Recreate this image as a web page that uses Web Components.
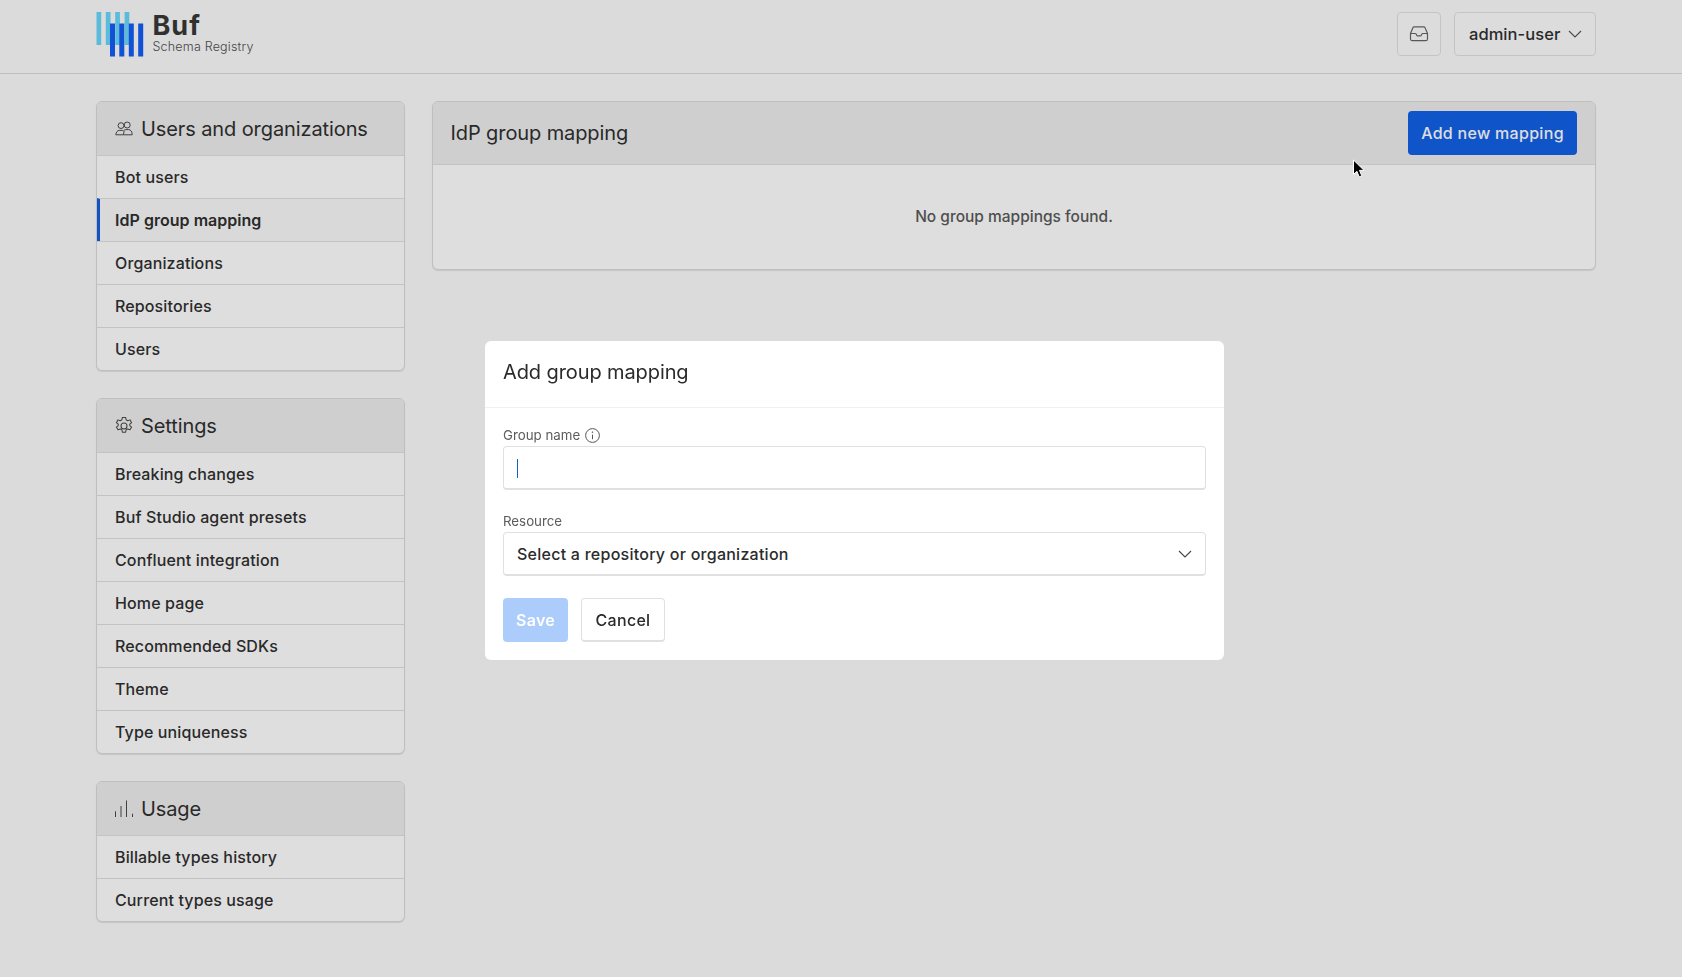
<!DOCTYPE html>
<html lang="en">
<head>
<meta charset="utf-8">
<title>IdP group mapping</title>
<style>
	html, body { margin: 0; height: 100%; }
	body { background: #fcfcfc; color: #303030; font-family: Inter, "Liberation Sans", sans-serif; overflow: hidden; }
</style>
</head>
<body>
<app-header></app-header>
<app-layout>
	<side-bar slot="side">
		<nav-group title="Users and organizations" icon="users">
			<nav-item>Bot users</nav-item>
			<nav-item active>IdP group mapping</nav-item>
			<nav-item>Organizations</nav-item>
			<nav-item>Repositories</nav-item>
			<nav-item>Users</nav-item>
		</nav-group>
		<nav-group title="Settings" icon="gear">
			<nav-item>Breaking changes</nav-item>
			<nav-item>Buf Studio agent presets</nav-item>
			<nav-item>Confluent integration</nav-item>
			<nav-item>Home page</nav-item>
			<nav-item>Recommended SDKs</nav-item>
			<nav-item>Theme</nav-item>
			<nav-item>Type uniqueness</nav-item>
		</nav-group>
		<nav-group title="Usage" icon="chart">
			<nav-item>Billable types history</nav-item>
			<nav-item>Current types usage</nav-item>
		</nav-group>
	</side-bar>
	<mapping-card></mapping-card>
</app-layout>
<modal-backdrop>
	<mapping-dialog></mapping-dialog>
</modal-backdrop>
<mouse-pointer></mouse-pointer>

<script>
const ICONS = {
	users: `<svg width="18" height="18" viewBox="0 0 18 18" fill="none" stroke="currentColor" stroke-width="1"><circle cx="6" cy="5.6" r="2.9"/><circle cx="12.2" cy="5" r="3"/><path d="M.8 14.8c.3-2.6 1.6-4.4 3.4-4.4h3.2c.9 0 1.4.5 1.8 1.2M.8 14.8h7.6l.6-3.2M8.6 14.8h8.6c0-3.2-1.5-5.2-3.5-5.2h-2.8c-.9 0-1.7.4-2.2 1.2"/></svg>`,
	gear: `<svg width="18" height="18" viewBox="1.2 1.2 15.6 15.6" fill="none" stroke="currentColor" stroke-width=".9"><circle cx="9" cy="9" r="2.6"/><path d="M7.6 1.6h2.8l.4 2 1.4.8 2-.7 1.4 2.4-1.6 1.3v1.2l1.6 1.3-1.4 2.4-2-.7-1.4.8-.4 2H7.6l-.4-2-1.4-.8-2 .7-1.4-2.4 1.6-1.3V7.4L2.4 6.1l1.4-2.4 2 .7 1.4-.8z" stroke-linejoin="round"/></svg>`,
	chart: `<svg width="18" height="18" viewBox="0 0 18 18" fill="none" stroke="currentColor" stroke-width="1"><path d="M.5 17v-5.7M6 17V6M11.5 17V.5M17.5 17v-3.3"/></svg>`
};

class AppHeader extends HTMLElement {
	constructor() {
		super();
		this.attachShadow({mode:'open'});
		this.shadowRoot.innerHTML = `
			<style>
				:host {
					display: flex;
					align-items: center;
					justify-content: space-between;
					box-sizing: border-box;
					height: 74px;
					padding: 0 86px 5px 96px;
					border-bottom: 1px solid #dcdcdc;
					background: #fcfcfc;
				}
				.brand { display: flex; align-items: flex-start; gap: 8.5px; }
				.names { display: flex; flex-direction: column; }
				.buf { padding-top: 1px; font-size: 27px; font-weight: 700; line-height: 26px; height: 26px; color: #383838; letter-spacing: 1px; }
				.sub { margin-top: .5px; font-size: 12.5px; line-height: 15px; color: #505050; font-weight: 300; letter-spacing: .2px; }
				.actions { display: flex; gap: 13px; }
				button {
					display: flex;
					align-items: center;
					box-sizing: border-box;
					height: 44px;
					background: #fdfdfd;
					border: 1px solid #e2e2e2;
					border-radius: 4px;
					font: 500 16.5px Inter, "Liberation Sans", sans-serif;
					letter-spacing: .05px;
					color: #303030;
					padding: 0;
				}
				.inbox { width: 44px; justify-content: center; color: #666; }
				.user { width: 142px; padding-left: 14px; gap: 8px; }
			</style>
			<div class="brand">
				<svg width="48" height="45" viewBox="0 0 48 45">
					<g fill="#68d8fb">
						<rect x="0.5" y="0" width="4.7" height="33"/>
						<rect x="9.8" y="0" width="4.7" height="33"/>
						<rect x="19.2" y="0" width="4.7" height="33"/>
						<rect x="28.6" y="0" width="4.7" height="33"/>
					</g>
					<g fill="#145df5">
						<rect x="14" y="11.5" width="5" height="33"/>
						<rect x="23.3" y="11.5" width="5" height="33"/>
						<rect x="32.8" y="11.5" width="5" height="33"/>
						<rect x="42.2" y="11.5" width="5" height="33"/>
					</g>
				</svg>
				<div class="names">
					<span class="buf">Buf</span>
					<span class="sub">Schema Registry</span>
				</div>
			</div>
			<div class="actions">
				<button class="inbox" aria-label="Inbox">
					<svg width="20" height="18" viewBox="0 0 20 18" fill="none" stroke="currentColor" stroke-width="1.2" stroke-linejoin="round"><path d="M1.5 8.5 4 2.6c.2-.5.7-.8 1.2-.8h9.6c.5 0 1 .3 1.2.8l2.5 5.9v5.4c0 1-.8 1.8-1.8 1.8H3.3c-1 0-1.8-.8-1.8-1.8z"/><path d="M1.5 8.5h4.7c.4 0 .7.2.9.6l.6 1.2c.2.4.5.6.9.6h2.8c.4 0 .7-.2.9-.6l.6-1.2c.2-.4.5-.6.9-.6h4.7"/></svg>
				</button>
				<button class="user">admin-user
					<svg width="14" height="8" viewBox="0 0 14 8" fill="none" stroke="#555" stroke-width="1.1"><path d="M1 1l6 6 6-6"/></svg>
				</button>
			</div>
		`;
	}
}

class AppLayout extends HTMLElement {
	constructor() {
		super();
		this.attachShadow({mode:'open'});
		this.shadowRoot.innerHTML = `
			<style>
				:host {
					display: grid;
					grid-template-columns: 309px 1fr;
					column-gap: 27px;
					align-items: start;
					padding: 27px 86px 0 96px;
				}
			</style>
			<slot name="side"></slot>
			<slot></slot>
		`;
	}
}

class SideBar extends HTMLElement {
	constructor() {
		super();
		this.attachShadow({mode:'open'});
		this.shadowRoot.innerHTML = `
			<style>:host { display: flex; flex-direction: column; gap: 27px; }</style>
			<slot></slot>
		`;
	}
}

class NavGroup extends HTMLElement {
	constructor() {
		super();
		this.attachShadow({mode:'open'});
		const icon = ICONS[this.getAttribute('icon')] || '';
		const title = this.getAttribute('title');
		this.removeAttribute('title');
		this.shadowRoot.innerHTML = `
			<style>
				:host {
					display: block;
					box-sizing: border-box;
					background: #fff;
					border: 1px solid #dcdcdc;
					border-radius: 6px;
					box-shadow: 0 1px 1px rgba(0, 0, 0, .1);
					overflow: hidden;
				}
				header {
					display: flex;
					align-items: center;
					gap: 8px;
					box-sizing: border-box;
					height: 53px;
					padding-left: 18px;
					background: #eeeeee;
					font-size: 20px;
					letter-spacing: -.1px;
					color: #303030;
				}
				svg { display: block; color: #4a4a4a; }
			</style>
			<header>${icon}<span>${title}</span></header>
			<slot></slot>
		`;
	}
}

class NavItem extends HTMLElement {
	constructor() {
		super();
		this.attachShadow({mode:'open'});
		this.shadowRoot.innerHTML = `
			<style>
				:host {
					display: block;
					box-sizing: border-box;
					height: 43px;
					line-height: 42px;
					padding-left: 18px;
					border-top: 1px solid #e0e0e0;
					font-size: 16px;
					font-weight: 500;
					letter-spacing: .13px;
					color: #303030;
				}
				:host([active]) {
					padding-left: 15px;
					border-left: 3px solid #1560e0;
					background: #fafafa;
					font-weight: 600;
					letter-spacing: .03px;
				}
			</style>
			<slot></slot>
		`;
	}
}

class MappingCard extends HTMLElement {
	constructor() {
		super();
		this.attachShadow({mode:'open'});
		this.shadowRoot.innerHTML = `
			<style>
				:host {
					display: block;
					box-sizing: border-box;
					height: 169px;
					background: #fff;
					border: 1px solid #dcdcdc;
					border-radius: 6px;
					box-shadow: 0 1px 1px rgba(0, 0, 0, .1);
					overflow: hidden;
				}
				header {
					display: flex;
					align-items: center;
					justify-content: space-between;
					box-sizing: border-box;
					height: 63px;
					padding: 0 18px 0 17.5px;
					background: #eeeeee;
					border-bottom: 1px solid #e0e0e0;
					font-size: 20px;
					letter-spacing: -.1px;
				}
				button {
					box-sizing: border-box;
					width: 169px;
					height: 44px;
					background: #1361e8;
					border: 0;
					border-radius: 4px;
					color: #fff;
					font: 500 16px Inter, "Liberation Sans", sans-serif;
					letter-spacing: .3px;
				}
				p {
					margin: 0;
					padding-top: 42px;
					text-align: center;
					font-size: 15.5px;
					font-weight: 500;
					color: #5a5a5a;
				}
			</style>
			<header><span>IdP group mapping</span><button>Add new mapping</button></header>
			<p>No group mappings found.</p>
		`;
	}
}

class ModalBackdrop extends HTMLElement {
	constructor() {
		super();
		this.attachShadow({mode:'open'});
		this.shadowRoot.innerHTML = `
			<style>
				:host {
					position: fixed;
					inset: 0;
					display: block;
					box-sizing: border-box;
					padding: 341px 0 0 485px;
					background: rgba(0, 0, 0, .13);
				}
			</style>
			<slot></slot>
		`;
	}
}

class FormField extends HTMLElement {
	constructor() {
		super();
		this.attachShadow({mode:'open'});
		this.shadowRoot.innerHTML = `
			<style>
				:host { display: block; }
				.label {
					display: flex;
					align-items: center;
					gap: 5px;
					height: 20px;
					margin-bottom: 1px;
					font-size: 13.3px;
					color: #5c5c5c;
				}
				.box {
					position: relative;
					display: block;
				}
			</style>
			<div class="label"><slot name="label"></slot></div>
			<div class="box"><slot></slot></div>
		`;
	}
}

class MappingDialog extends HTMLElement {
	constructor() {
		super();
		this.attachShadow({mode:'open'});
		this.shadowRoot.innerHTML = `
			<style>
				:host {
					display: block;
					box-sizing: border-box;
					width: 739px;
					height: 319px;
					background: #fff;
					border-radius: 6px;
					color: #2b2b2b;
					overflow: hidden;
				}
				h2 {
					box-sizing: border-box;
					margin: 0;
					height: 67px;
					padding: 0 18px;
					line-height: 63px;
					border-bottom: 1px solid #f0f0f0;
					font-size: 20px;
					font-weight: 400;
					letter-spacing: -.1px;
				}
				form {
					display: flex;
					flex-direction: column;
					gap: 21px;
					padding: 17px 18px 0;
				}
				.control {
					display: flex;
					align-items: center;
					justify-content: space-between;
					box-sizing: border-box;
					width: 100%;
					height: 44px;
					padding: 0 13px;
					background: #fff;
					border: 1px solid #e0e0e0;
					border-bottom-width: 2px;
					border-radius: 4px;
					font: 500 16px Inter, "Liberation Sans", sans-serif;
					letter-spacing: .25px;
					color: #2b2b2b;
					outline: none;
				}
				input.control { caret-color: transparent; }
				.caret {
					position: absolute;
					left: 14px;
					top: 13px;
					width: 1px;
					height: 19px;
					background: #1560c8;
				}
				.buttons { display: flex; gap: 13px; margin-top: 1px; }
				button {
					box-sizing: border-box;
					height: 44px;
					border-radius: 4px;
					font: 500 16px Inter, "Liberation Sans", sans-serif;
					letter-spacing: .3px;
					padding: 0;
				}
				.save { width: 65px; background: #accdfb; border: 0; color: #fff; font-weight: 600; }
				.cancel { width: 84px; background: #fff; border: 1px solid #e0e0e0; border-bottom-width: 2px; color: #2b2b2b; }
			</style>
			<h2>Add group mapping</h2>
			<form>
				<form-field>
					<span slot="label">Group name</span>
					<svg slot="label" width="15" height="15" viewBox="0 0 15 15" fill="none" stroke="#555" stroke-width="1"><circle cx="7.5" cy="7.5" r="6.9"/><path d="M7.5 6.6v4.6"/><circle cx="7.5" cy="4.2" r=".4"/></svg>
					<input class="control" type="text" aria-label="Group name">
					<span class="caret"></span>
				</form-field>
				<form-field>
					<span slot="label">Resource</span>
					<div class="control">
						<span>Select a repository or organization</span>
						<svg width="14" height="8" viewBox="0 0 14 8" fill="none" stroke="#444" stroke-width="1.1"><path d="M1 1l6 6 6-6"/></svg>
					</div>
				</form-field>
				<div class="buttons">
					<button class="save" type="button">Save</button>
					<button class="cancel" type="button">Cancel</button>
				</div>
			</form>
		`;
	}
}

class MousePointer extends HTMLElement {
	constructor() {
		super();
		this.attachShadow({mode:'open'});
		this.shadowRoot.innerHTML = `
			<style>
				:host { position: fixed; left: 1352px; top: 159px; display: block; width: 14px; height: 20px; }
				svg { display: block; }
			</style>
			<svg width="14" height="20" viewBox="0 0 14 20"><path d="M1.5 1v14.5l3.4-3.2 2.3 5.6 2.6-1.1-2.3-5.4h4.6z" fill="#000" stroke="#fff" stroke-width="1"/></svg>
		`;
	}
}

customElements.define('app-header', AppHeader);
customElements.define('app-layout', AppLayout);
customElements.define('side-bar', SideBar);
customElements.define('nav-group', NavGroup);
customElements.define('nav-item', NavItem);
customElements.define('mapping-card', MappingCard);
customElements.define('modal-backdrop', ModalBackdrop);
customElements.define('form-field', FormField);
customElements.define('mapping-dialog', MappingDialog);
customElements.define('mouse-pointer', MousePointer);
</script>
</body>
</html>
